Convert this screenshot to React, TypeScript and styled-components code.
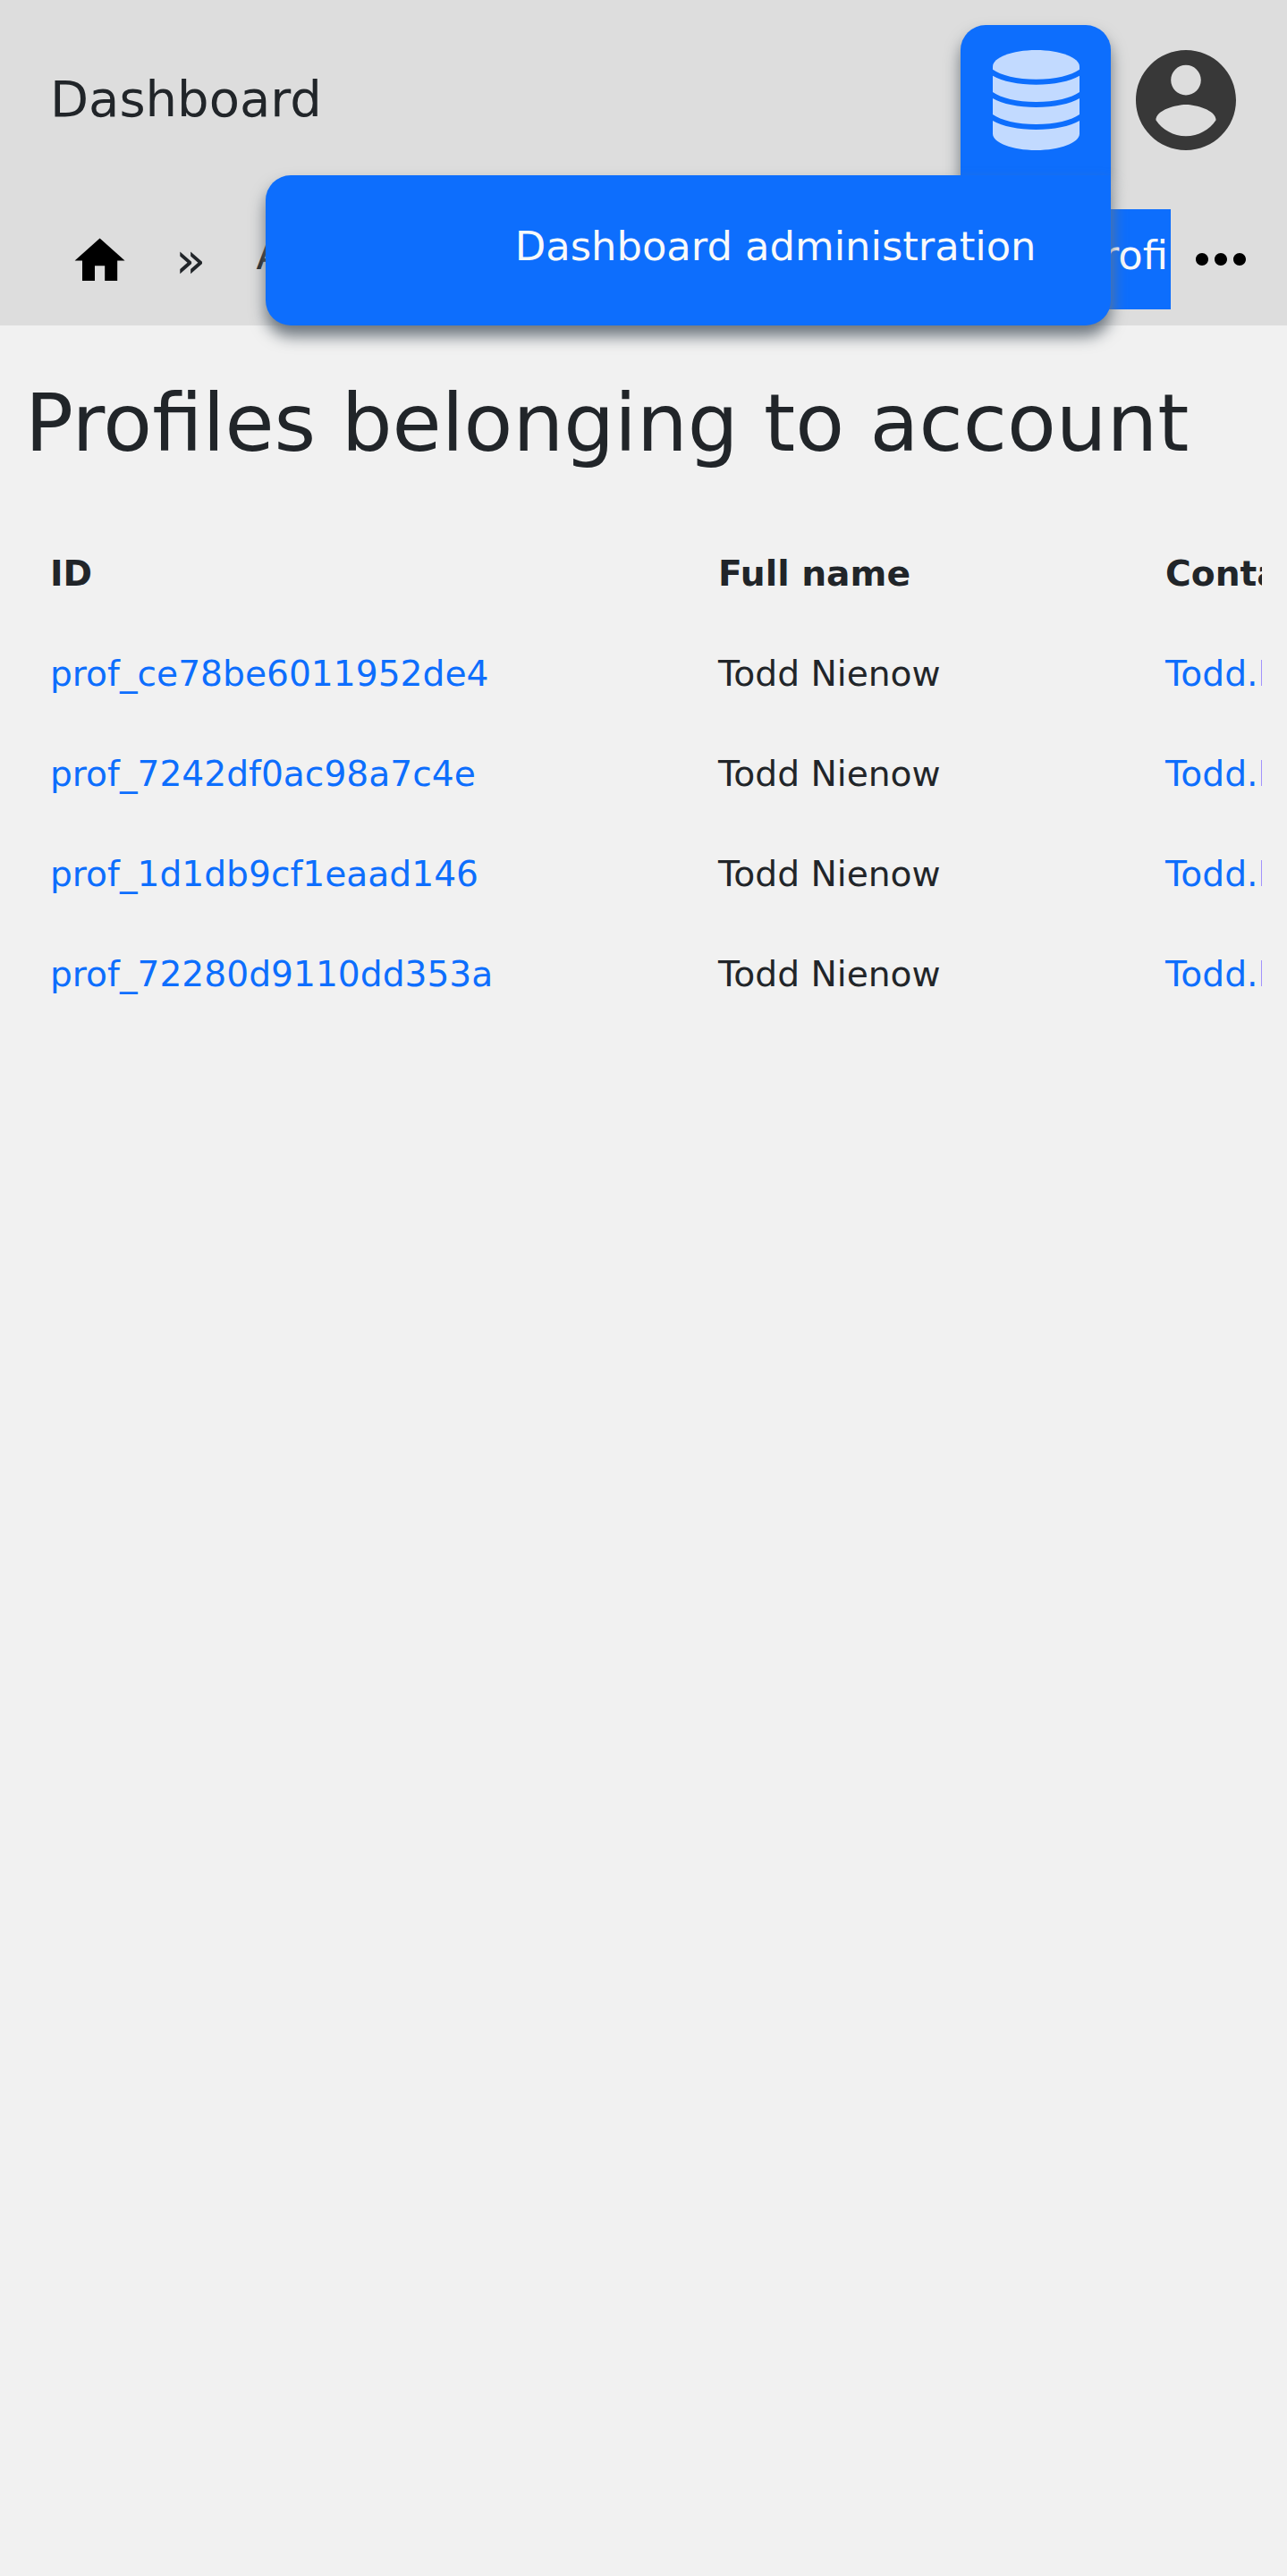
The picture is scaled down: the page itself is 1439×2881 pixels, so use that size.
import React from "react";
import styled, { createGlobalStyle } from "styled-components";

const GlobalStyle = createGlobalStyle`
  * { box-sizing: border-box; }
  html, body { margin: 0; background: #f1f1f1; }
  body {
    font-family: "DejaVu Sans", sans-serif;
    color: #212529;
    overflow: hidden;
  }
`;

const Page = styled.div`
  min-height: 2881px;
  background: #f1f1f1;
`;

const Header = styled.header`
  position: relative;
  height: 364px;
  background: #dddddd;
`;

const TopBar = styled.div`
  display: flex;
  align-items: flex-start;
  height: 196px;
  padding: 28px 29px 0 56px;
`;

const Brand = styled.div`
  flex: 1;
  font-size: 56px;
  line-height: 84px;
  padding-top: 41px;
`;

const AdminButton = styled.button`
  width: 168px;
  height: 168px;
  padding: 28px 0 0;
  border: 0;
  border-radius: 28px 28px 0 0;
  background: #0d6efd;
  box-shadow: 0 11.2px 16.8px #6c757d;
  display: flex;
  justify-content: center;
  align-items: flex-start;
`;

const ProfileButton = styled.button`
  border: 0;
  padding: 28px;
  background: none;
  line-height: 0;
`;

const AdminMenu = styled.div`
  position: absolute;
  z-index: 2;
  top: 196px;
  right: 197px;
  width: 945px;
  height: 168px;
  padding-right: 83.5px;
  border-radius: 28px 0 28px 28px;
  background: #0d6efd;
  color: #f8f9fa;
  box-shadow: 0 11.2px 16.8px #6c757d;
  font-size: 44.8px;
  line-height: 160px;
  text-align: right;
`;

const CrumbBar = styled.div`
  display: flex;
  align-items: center;
  height: 112px;
  margin-top: 38.4px;
  font-size: 44.8px;
`;

const Crumbs = styled.div`
  display: flex;
  align-items: center;
  width: 1309px;
  height: 112px;
  padding-left: 78.4px;
  overflow: hidden;
  white-space: nowrap;
`;

const HomeIcon = styled.svg`
  flex: none;
  width: 67.2px;
  height: 67.2px;
  margin-top: 3px;
`;

const Separator = styled.span`
  flex: none;
  width: 141px;
  padding-right: 6px;
  text-align: center;
  font-size: 56px;
  line-height: 109px;
`;

const Crumb = styled.span<{ $width?: number; $active?: boolean }>`
  flex: none;
  width: ${(p) => (p.$width ? p.$width + "px" : "auto")};
  height: 112px;
  line-height: 103px;
  padding: 0 ${(p) => (p.$active ? 28 : 0)}px;
  color: ${(p) => (p.$active ? "#f8f9fa" : "inherit")};
  background: ${(p) => (p.$active ? "#0d6efd" : "transparent")};
`;

const MoreIcon = styled.svg`
  flex: none;
  width: 84px;
  height: 84px;
  margin-left: 14px;
`;

const Main = styled.main`
  padding: 56px 28px 0;
`;

const Title = styled.h1`
  margin: 0;
  font-size: 89.6px;
  font-weight: 400;
  line-height: 107.5px;
  white-space: nowrap;
`;

const TableScroll = styled.div`
  margin-top: 58.7px;
  overflow: hidden;
`;

const Table = styled.div`
  display: grid;
  grid-template-columns: 747px 500px 700px;
  font-size: 39.2px;
  white-space: nowrap;
`;

const Cell = styled.div<{ $head?: boolean; $link?: boolean }>`
  height: 112px;
  line-height: 112px;
  padding: 0 28px;
  font-weight: ${(p) => (p.$head ? 700 : 400)};
  color: ${(p) => (p.$link ? "#0d6efd" : "inherit")};
`;

const ids = [
  "prof_ce78be6011952de4",
  "prof_7242df0ac98a7c4e",
  "prof_1d1db9cf1eaad146",
  "prof_72280d9110dd353a",
];

export default function App() {
  return (
    <Page>
      <GlobalStyle />
      <Header>
        <TopBar>
          <Brand>Dashboard</Brand>
          <AdminButton aria-label="Administration">
            <svg width="97" height="112" viewBox="0 0 97 112" fill="#fff" fillOpacity="0.75">
              <path d="M0 18.5C0 8.3 21.7 0 48.5 0S97 8.3 97 18.5V21.8C88 28.2 70 32.8 48.5 32.8S9 28.2 0 21.8Z" />
              <path d="M0 28.7C11 35 28.5 38.7 48.5 38.7S86 35 97 28.7V46.9C88 53.3 70 57.9 48.5 57.9S9 53.3 0 46.9Z" />
              <path d="M0 53.9C11 60.2 28.5 63.9 48.5 63.9S86 60.2 97 53.9V72C88 78.4 70 83 48.5 83S9 78.4 0 72Z" />
              <path d="M0 79C11 85.3 28.5 89 48.5 89S86 85.3 97 79V93.5C97 103.7 75.3 112 48.5 112S0 103.7 0 93.5Z" />
            </svg>
          </AdminButton>
          <ProfileButton aria-label="Profile">
            <svg width="112" height="112" viewBox="2 2 20 20" fill="#000" fillOpacity="0.75">
              <path d="M12 2C6.48 2 2 6.48 2 12s4.48 10 10 10 10-4.48 10-10S17.52 2 12 2zm0 3c1.66 0 3 1.34 3 3s-1.34 3-3 3-3-1.34-3-3 1.34-3 3-3zm0 14.2c-2.5 0-4.71-1.28-6-3.22.03-1.99 4-3.08 6-3.08 1.99 0 5.97 1.09 6 3.08-1.29 1.94-3.5 3.22-6 3.22z" />
            </svg>
          </ProfileButton>
        </TopBar>
        <AdminMenu>Dashboard administration</AdminMenu>
        <CrumbBar>
          <Crumbs>
            <HomeIcon viewBox="0 0 24 24">
              <path d="M10 20v-6h4v6h5v-8h3L12 3 2 12h3v8z" />
            </HomeIcon>
            <Separator>»</Separator>
            <Crumb $width={892}>Accounts</Crumb>
            <Crumb $active>Profiles</Crumb>
          </Crumbs>
          <MoreIcon viewBox="0 0 24 24">
            <path d="M6 10c-1.1 0-2 .9-2 2s.9 2 2 2 2-.9 2-2-.9-2-2-2zm12 0c-1.1 0-2 .9-2 2s.9 2 2 2 2-.9 2-2-.9-2-2-2zm-6 0c-1.1 0-2 .9-2 2s.9 2 2 2 2-.9 2-2-.9-2-2-2z" />
          </MoreIcon>
        </CrumbBar>
      </Header>
      <Main>
        <Title>Profiles belonging to account</Title>
        <TableScroll>
          <Table>
            <Cell $head>ID</Cell>
            <Cell $head>Full name</Cell>
            <Cell $head>Contact</Cell>
            {ids.map((id) => (
              <React.Fragment key={id}>
                <Cell $link>{id}</Cell>
                <Cell>Todd Nienow</Cell>
                <Cell $link>Todd.Nienow</Cell>
              </React.Fragment>
            ))}
          </Table>
        </TableScroll>
      </Main>
    </Page>
  );
}
